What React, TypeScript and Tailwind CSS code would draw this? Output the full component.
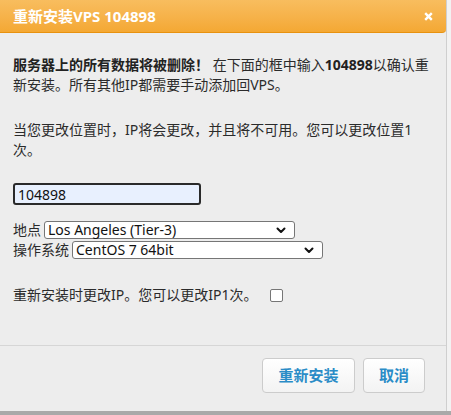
import React from "react";

const font = {
  fontFamily: '"Noto Sans", "Noto Sans CJK SC", sans-serif',
};

const Chevron: React.FC = () => {
  return (
    <svg width="10" height="7" viewBox="0 0 10 7" fill="none" aria-hidden="true">
      <path
        d="M1.5 1.5 5 5l3.5-3.5"
        stroke="#111"
        strokeWidth="2"
        strokeLinecap="round"
        strokeLinejoin="round"
      />
    </svg>
  );
};

const CloseIcon: React.FC = () => {
  return (
    <svg width="9" height="9" viewBox="0 0 9 9" fill="none" aria-hidden="true">
      <path d="M1.2 1.2 7.8 7.8M7.8 1.2 1.2 7.8" stroke="#fff" strokeWidth="2.4" />
    </svg>
  );
};

const FakeSelect: React.FC<{ value: string }> = ({ value }) => {
  return (
    <div className="flex h-[18px] w-[251px] items-center justify-between rounded-[3px] border border-[#767676] bg-white pl-[3px] pr-[8px] text-[14px] leading-none text-[#111]">
      <span>{value}</span>
      <Chevron />
    </div>
  );
};

export default function App() {
  return (
    <div
      className="flex h-[415px] w-[451px] flex-col bg-[#f2f2f2] text-[14px] text-[#2b2b2b]"
      style={font}
    >
      <div className="flex h-[411px] w-[447px] flex-col border-r border-[#cfcfcf] bg-[#ededed]">
        {/* title bar */}
        <div className="flex h-[33px] items-center justify-between rounded-br-[4px] border-b border-[#e8920f] bg-gradient-to-b from-[#f8bd5e] to-[#f4a833] pl-[13px] pr-[13px]">
          <span className="text-[15px] font-bold text-white">重新安装VPS 104898</span>
          <CloseIcon />
        </div>

        {/* body */}
        <div className="flex flex-1 flex-col px-[13px] pt-[22px]">
          <p className="whitespace-nowrap leading-[20px]">
            <b className="font-bold text-[#222]">服务器上的所有数据将被删除！</b> 在下面的框中输入
            <b className="font-bold text-[#222]">104898</b>以确认重
            <br />
            新安装。所有其他IP都需要手动添加回VPS。
          </p>
          <p className="mt-[25px] whitespace-nowrap leading-[20px]">
            当您更改位置时，IP将会更改，并且将不可用。您可以更改位置1
            <br />
            次。
          </p>

          <input
            readOnly
            value="104898"
            className="mt-[23px] h-[22px] w-[188px] rounded-[3px] border-2 border-[#2a2a2a] bg-[#e8f0fe] px-[3px] text-[14px] leading-none text-[#111] outline-none"
          />

          <div className="mt-[16px] flex flex-col gap-[2px]">
            <div className="flex items-center gap-[3px] leading-[18px]">
              <span>地点</span>
              <FakeSelect value="Los Angeles (Tier-3)" />
            </div>
            <div className="flex items-center gap-[3px] leading-[18px]">
              <span>操作系统</span>
              <FakeSelect value="CentOS 7 64bit" />
            </div>
          </div>

          <div className="mt-[26px] flex items-center gap-[13px] leading-[20px]">
            <span>重新安装时更改IP。您可以更改IP1次。</span>
            <span className="h-[13px] w-[13px] rounded-[2px] border border-[#767676] bg-white" />
          </div>
        </div>

        {/* footer */}
        <div className="flex h-[66px] items-start justify-end gap-[8px] border-t border-[#d6d6d6] pr-[21px] pt-[12px]">
          <button className="h-[35px] w-[93px] rounded-[4px] border border-[#cccccc] bg-gradient-to-b from-white to-[#f3f3f3] text-[15px] font-bold text-[#2a8cc7]">
            重新安装
          </button>
          <button className="h-[35px] w-[62px] rounded-[4px] border border-[#cccccc] bg-gradient-to-b from-white to-[#f3f3f3] text-[15px] font-bold text-[#2a8cc7]">
            取消
          </button>
        </div>
      </div>
      <div className="h-[4px] w-full bg-[#a9a9a9]" />
    </div>
  );
}
